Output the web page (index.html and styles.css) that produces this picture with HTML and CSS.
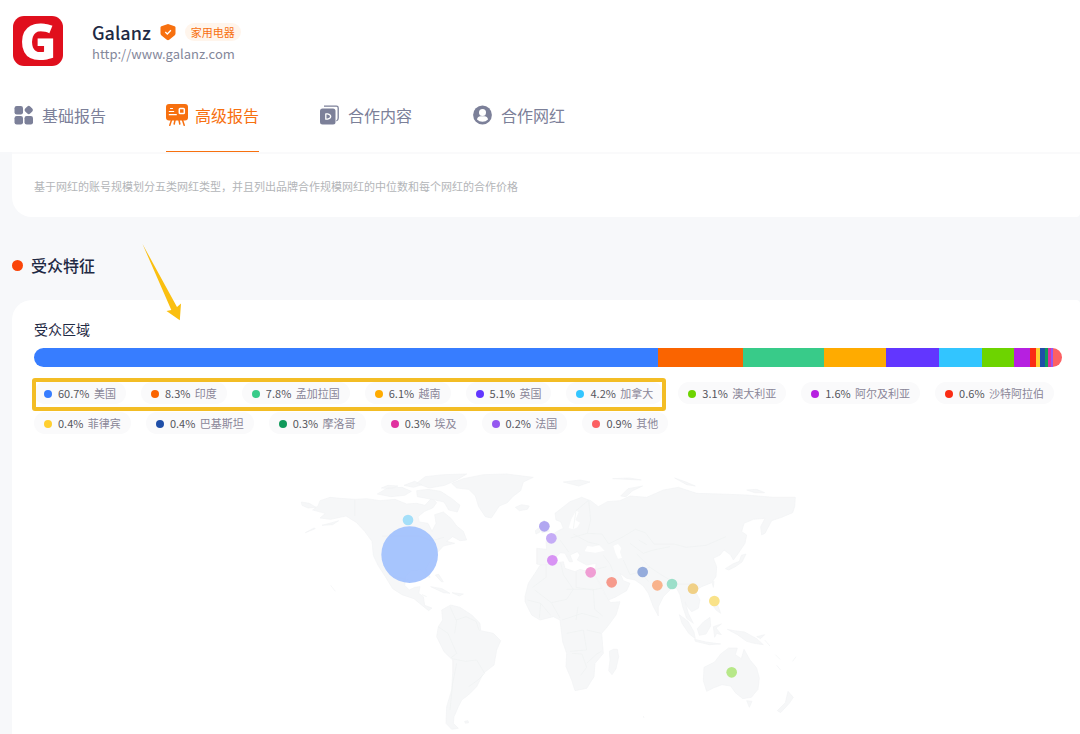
FILE: index.html
```html
<!DOCTYPE html>
<html lang="zh-CN">
<head>
<meta charset="utf-8">
<meta name="viewport" content="width=device-width, initial-scale=1">
<title>Galanz 高级报告</title>
<link rel="stylesheet" href="styles.css">
</head>
<body>
<header class="header">
  <div class="brand">
    <div class="logo">G</div>
    <div class="brand-info">
      <div class="brand-line">
        <h1 class="brand-name">Galanz</h1>
        <svg class="shield" viewBox="0 0 16 18" aria-hidden="true"><path d="M8 1l6.600 2.300q.9.300.9 1.300v6q0 1.200-1 2L9.200 16.800q-1.200.800-2.400 0L1.500 12.600q-1-.8-1-2v-6q0-1 .9-1.300z" fill="#f7700f"/><path d="M5.300 9l2 2 3.600-3.800" fill="none" stroke="#fff" stroke-width="1.300"/></svg>
        <span class="tag">家用电器</span>
      </div>
      <a class="brand-url" href="http://www.galanz.com">http://www.galanz.com</a>
    </div>
  </div>
  <nav class="tabs">
    <a class="tab" href="#basic">
      <svg class="tab-icon" viewBox="0 0 22 22" aria-hidden="true" fill="currentColor"><rect x="1.500" y="2" width="8.500" height="8.500" rx="2.200"/><rect x="1.500" y="12" width="8.500" height="8.500" rx="2.200"/><rect x="11.500" y="12" width="8.500" height="8.500" rx="2.200"/><rect x="12.250" y="2.500" width="7" height="7" rx="2" transform="rotate(45 15.750 6)"/></svg>
      <span>基础报告</span>
    </a>
    <a class="tab tab-active" href="#advanced" aria-current="page">
      <svg class="tab-icon" viewBox="0 0 22 22" aria-hidden="true"><rect x="0" y="0" width="22" height="16.500" rx="3" fill="#f7700f"/><path d="M5.500 16l-1.700 5.300M9 16l-.8 4M13 16l.8 4M16.500 16l1.700 5.300" stroke="#f7700f" stroke-width="1.500" stroke-linecap="round"/><path d="M4.500 4.500h2M3.300 7.500h4.400M3.300 10.700h7" stroke="#fff" stroke-width="1.200" stroke-linecap="round"/><rect x="13.300" y="4.500" width="5" height="5" rx=".8" fill="none" stroke="#fff" stroke-width="1.500"/></svg>
      <span>高级报告</span>
    </a>
    <a class="tab" href="#content">
      <svg class="tab-icon" viewBox="0 0 22 22" aria-hidden="true"><path d="M5 2.200h12.500q1.700 0 1.700 1.700V14q0 2.500-1.800 2.900" fill="none" stroke="currentColor" stroke-width="1.300"/><rect x="1" y="4.500" width="15.500" height="16" rx="2.500" fill="currentColor"/><path d="M6.800 9.800v5.400h1.700q3.200-.8 3.200-2.700T8.500 9.800z" fill="none" stroke="#fff" stroke-width="1.300" stroke-linejoin="round"/></svg>
      <span>合作内容</span>
    </a>
    <a class="tab" href="#creators">
      <svg class="tab-icon" viewBox="0 0 22 22" aria-hidden="true"><circle cx="10.500" cy="11" r="9.400" fill="currentColor"/><circle cx="10.500" cy="8.500" r="3.500" fill="#fff"/><path d="M5 15.500q.2-2.800 3.600-3.200h3.800q3.400.4 3.600 3.200-2.200 2.200-5.500 2.200T5 15.500z" fill="#fff"/></svg>
      <span>合作网红</span>
    </a>
  </nav>
</header>

<main class="main">
  <section class="card note-card">
    <p class="note">基于网红的账号规模划分五类网红类型，并且列出品牌合作规模网红的中位数和每个网红的合作价格</p>
  </section>

  <h2 class="section-title">受众特征</h2>

  <section class="card region-card">
    <h3 class="card-title">受众区域</h3>
    <div class="bar">
      <span class="c-us" style="flex-grow:60.7"></span>
      <span class="c-in" style="flex-grow:8.3"></span>
      <span class="c-bd" style="flex-grow:7.8"></span>
      <span class="c-vn" style="flex-grow:6.1"></span>
      <span class="c-gb" style="flex-grow:5.1"></span>
      <span class="c-ca" style="flex-grow:4.2"></span>
      <span class="c-au" style="flex-grow:3.1"></span>
      <span class="c-dz" style="flex-grow:1.6"></span>
      <span class="c-sa" style="flex-grow:.6"></span>
      <span class="c-ph" style="flex-grow:.4"></span>
      <span class="c-pk" style="flex-grow:.4"></span>
      <span class="c-ma" style="flex-grow:.3"></span>
      <span class="c-eg" style="flex-grow:.3"></span>
      <span class="c-fr" style="flex-grow:.2"></span>
      <span class="c-ot" style="flex-grow:.9"></span>
    </div>
    <ul class="legend">
      <li class="pill"><i class="dot c-us"></i><b>60.7%</b> 美国</li>
      <li class="pill"><i class="dot c-in"></i><b>8.3%</b> 印度</li>
      <li class="pill"><i class="dot c-bd"></i><b>7.8%</b> 孟加拉国</li>
      <li class="pill"><i class="dot c-vn"></i><b>6.1%</b> 越南</li>
      <li class="pill"><i class="dot c-gb"></i><b>5.1%</b> 英国</li>
      <li class="pill"><i class="dot c-ca"></i><b>4.2%</b> 加拿大</li>
      <li class="pill"><i class="dot c-au"></i><b>3.1%</b> 澳大利亚</li>
      <li class="pill"><i class="dot c-dz"></i><b>1.6%</b> 阿尔及利亚</li>
      <li class="pill"><i class="dot c-sa"></i><b>0.6%</b> 沙特阿拉伯</li>
      <li class="pill"><i class="dot c-ph"></i><b>0.4%</b> 菲律宾</li>
      <li class="pill"><i class="dot c-pk"></i><b>0.4%</b> 巴基斯坦</li>
      <li class="pill"><i class="dot c-ma"></i><b>0.3%</b> 摩洛哥</li>
      <li class="pill"><i class="dot c-eg"></i><b>0.3%</b> 埃及</li>
      <li class="pill"><i class="dot c-fr"></i><b>0.2%</b> 法国</li>
      <li class="pill"><i class="dot c-ot"></i><b>0.9%</b> 其他</li>
    </ul>
    <div class="highlight" aria-hidden="true"></div>
    <svg class="arrow" viewBox="142 244 40 77" aria-hidden="true"><path d="M142.500 244L177 307l4-3.500-1.200 16.800L166.500 311l4.800-1z" fill="#fabf10"/></svg>

    <svg class="map" viewBox="0 0 1548 822" role="img" aria-label="受众区域分布地图">
      <g class="land">
        <!-- North and Central America -->
        <path d="M90 122l30-10 30 3 45 3 35-2 40 6 45-4 35 14 30-2 25 6 20-22 15 14-12 16-24 10-20 16 4 16 26 4 12 24 12-24-4-26 26-8 24 20 16 22 20 16 10 26-20 2-22-12-18 14 24 6-34 8-20 22-18 24-14 22 12 26-10-2-18-20-30 4-14 14-4 28 14 14 16-8 16-2-4 20 14 10 4 26 22 8-10 8-20-16-24-20-36-12-28-18-22-36-22-34-14-30-4-42-22-30-24-26-32-20-46 10-32-4 16-14-38-10 16-12z"/>
        <path d="M34 126l24 4 20 12-24 2-18-8zM46 218l26-14 4 2zM96 196l30-8 20-6-18 12z"/>
        <!-- Arctic islands and Greenland -->
        <path d="M262 102l30-18 44-2 28 12-20 12-42 4zM274 84l20-8 30 2-20 8zM342 76l32-12 22 10-26 8zM380 92l34-4 38 6 34 22 24 20-8 20-26-6-14-24-36-8-44-8zM380 70l26-20 54-6 70-2-30 18-36 16-46 8z"/>
        <path d="M485 70L520 56 580 44 650 42 730 52 700 66 692 92 668 110 652 128 628 138 604 174 586 170 566 140 556 108 536 88 500 84z"/>
        <path d="M676 142l18-8 24 4-6 10-24 4zM436 345l18 20 6 0-14-22zM422 380l34 6 24 14-20-2zM486 398l34 4-12 6zM122 376l14 18"/>
        <!-- South America -->
        <path d="M455 450L482 435 510 442 545 465 570 490 572 512 610 520 632 542 620 570 612 615 580 640 560 680 535 705 515 720 505 740 492 770 490 790 505 805 485 808 468 790 470 740 485 690 488 640 488 600 462 575 440 530 445 500 458 480z"/>
        <path d="M524 784l10-2 2 6-10 2z"/>
        <g transform="translate(690 0)">
          <!-- Europe and Asia -->
          <path d="M105 160L150 125 185 112 212 122 235 140 262 125 300 122 330 108 380 112 430 90 475 82 530 100 600 102 680 105 760 112 826 112 824 140 818 158 785 172 755 182 735 220 725 225 722 200 735 175 700 178 672 190 665 215 680 225 675 250 655 280 640 300 632 285 612 270 600 285 580 295 590 320 588 350 575 368 545 380 525 392 540 420 535 445 515 455 502 440 495 425 505 460 520 490 500 475 488 440 480 405 470 385 455 385 430 410 415 440 415 468 400 440 385 400 370 378 345 360 320 355 300 340 310 362 330 370 320 392 285 412 265 420 245 380 225 345 228 310 200 315 172 300 180 285 172 275 150 285 158 305 148 305 135 280 122 278 110 290 95 295 82 318 50 312 50 265 80 268 78 245 95 225 115 212 130 205 122 185 108 180z"/>
          <path d="M62 212L72 180 84 196 88 214 66 218zM46 212l10-8 4 12-12 6zM130 66l50-6 30 6-34 12zM278 56l50-2 36 6zM302 108l22-22 44-8-30 14-20 18zM464 54l34 12 28 12-26-4zM680 90l30-2 24 10-30 0zM616 326l22-14 20-8 6-18 14-4-12 24-20 14-20 10z"/>
          <!-- Africa and Madagascar -->
          <path d="M60 316L95 312 130 305 135 325 165 335 180 328 222 340 240 375 258 410 272 428 300 425 288 465 262 500 245 520 250 580 225 610 222 650 200 685 165 692 155 660 138 620 140 580 128 545 120 480 100 470 60 480 35 465 15 425 15 410 25 370 45 340z"/>
          <path d="M268 574l12-6 12 0 4 22-8 36-12 18-10-12 4-32z"/>
        </g>
        <!-- South-east Asia and Oceania -->
        <path d="M1168 464l26 20 18 32 4 20-20-16-20-30zM1214 538l34 8 44 6-34 2-42-10zM1222 506l18-20 20-14 2 26-14 24-20 4zM1270 500l24-8-16 12 16 20-14-4-6 12zM1270 438l12-6 10 28-14-10zM1312 508l20 4 32 4 36 20 20 18-28-4-22-6-28-20zM1400 530l24-6-12 12zM1424 540l16 18M1266 368l6-4-2 18z"/>
        <path d="M1242 622l32-16 18-24 24-18 26 0-6 20 18 12 8-28 18 32 20 24 8 30-4 34-20 24-26 4-22-18-14-20-26-4-26 10-20 10-10-32z"/>
        <path d="M1370 722l16 2-8 18zM1494 694l16 18-12 18-26 28-10-6 24-24zM1456 584l14 14M1460 616l12 14M1508 604l10-14M1060 768l2 6"/>
      </g>
      <!-- Black Sea, Caspian Sea, Baltic Sea -->
      <path class="sea" d="M884 274l8-16 16 2 20-4 16 16-28 6zM970 258l14-6 10 12-4 12 6 18-12 2-8-18zM836 204l8-26 14-26 8 4-10 24 14 8-8 14-12 6z"/>
      <g class="borders">
        <path d="M194 120v48M276 228h110l40 14 36-10M310 350l60 12M396 404l14 6M480 440l18 40 30-10 30 14 10 28M444 500l30 20 26 60-18 14M486 596l40 8 34-4 24 40-20 20-28 20M500 610l-12 60-8 80M500 480l-6 40"/>
        <path d="M850 206l8-54 36-30M896 120l6 60-10 40-50 14M810 240l26 36M850 222l44 24 34 8M892 220l44 2 20 30 40-20 40-24 30 10 26 34 60 0 36 10 60-6 60-26M1020 250l40 30 30-10 50-10M1040 282l40 40 30 20 50 30 44 0M1000 300l20 44 30-8 30-16M940 286l20 26 10 24M910 330l40-10M1050 340l26 24M1070 254l-24-14"/>
        <path d="M768 314l0 38-40 30M812 308l8 36 30 44-20 30-46 10-50-38M858 336l0 46 50 8 28-6M830 388l80 0 4 60 24 20M712 420l40 10 30 36M784 428l26 46M816 480l60-20 50 14M830 520l50-10 10 60-50 4M890 510l44 10M846 580l30 2 14 40-18 24M890 610l30-28 14-8M864 440l-6 40M752 430l-4 44"/>
      </g>
      <g class="bubbles">
        <circle class="b-ca" cx="354" cy="180" r="16"/>
        <circle class="b-us" cx="359" cy="284" r="85"/>
        <circle class="b-gb" cx="763" cy="199" r="16"/>
        <circle class="b-fr" cx="784" cy="235" r="16"/>
        <circle class="b-dz" cx="787" cy="301" r="16"/>
        <circle class="b-eg" cx="902" cy="337" r="16"/>
        <circle class="b-sa" cx="965" cy="367" r="16"/>
        <circle class="b-pk" cx="1058" cy="336" r="16"/>
        <circle class="b-in" cx="1102" cy="376" r="16"/>
        <circle class="b-bd" cx="1146" cy="372" r="16"/>
        <circle class="b-vn" cx="1209" cy="386" r="16"/>
        <circle class="b-ph" cx="1273" cy="423" r="16"/>
        <circle class="b-au" cx="1325" cy="637" r="16"/>
      </g>
    </svg>
  </section>
</main>
</body>
</html>
```
FILE: styles.css
```css
* { box-sizing: border-box; }

body {
  margin: 0;
  min-height: 100vh;
  background: #f7f8fa;
  color: #1f2a44;
  font-family: "Noto Sans CJK SC", "Noto Sans", sans-serif;
}

h1, h2, h3, p, ul { margin: 0; padding: 0; }
a { color: inherit; text-decoration: none; }

/* Header */
.header {
  padding: 16px 13px 0;
  background: #fff;
}
.brand { display: flex; gap: 29px; }
.logo {
  width: 50px;
  height: 50px;
  border-radius: 11px;
  background: #e00f1d;
  color: #fff;
  font: 800 50px/50px "Open Sans", sans-serif;
  text-align: center;
}
.brand-info { padding-top: 5px; }
.brand-line { display: flex; align-items: center; height: 22px; }
.brand-name { font-size: 18px; font-weight: 500; line-height: 22px; }
.shield { width: 16px; height: 18px; margin: 0 9px; }
.tag {
  padding: 0 6px;
  border-radius: 9px;
  background: #fff5ec;
  color: #f7700f;
  font-size: 11px;
  line-height: 18px;
}
.brand-url {
  display: block;
  color: #84879a;
  font-size: 13px;
  line-height: 22px;
}

.tabs { display: flex; gap: 60px; margin-top: 14px; }
.tab {
  display: flex;
  align-items: center;
  gap: 7px;
  height: 72px;
  padding-bottom: 2px;
  border-bottom: 1px solid transparent;
  color: #7c8099;
  font-size: 16px;
}
.tab-active { border-bottom-color: #f7700f; color: #f7700f; }
.tab-icon { width: 22px; height: 22px; }

/* Cards */
.main { padding-left: 12px; }
.card {
  position: relative;
  padding: 0 18px 0 22px;
  border-radius: 20px 4px 4px 20px;
  background: #fff;
}
.note-card {
  padding-top: 21px;
  padding-bottom: 20px;
  border-top: 2px solid #fafafb;
  border-radius: 0 0 4px 20px;
}
.note { color: #b3b5b8; font-size: 11px; line-height: 22px; }

.section-title {
  display: flex;
  align-items: center;
  gap: 8px;
  margin: 36px 0 23px;
  font-size: 16px;
  font-weight: 500;
  line-height: 24px;
}
.section-title::before {
  content: "";
  width: 11px;
  height: 11px;
  border-radius: 50%;
  background: #fa4408;
}

.region-card { padding-top: 19px; border-radius: 20px 4px 0 0; }
.card-title { font-size: 14px; font-weight: 400; line-height: 20px; }

.bar {
  display: flex;
  height: 19px;
  margin-top: 9px;
  border-radius: 10px;
  overflow: hidden;
}
.bar span { flex-basis: 0; }

/* Legend */
.legend {
  display: flex;
  flex-wrap: wrap;
  gap: 8px 15px;
  margin-top: 15px;
  list-style: none;
}
.pill {
  padding: 0 10px;
  border-radius: 11px;
  background: #fafafb;
  color: #8a8698;
  font-size: 11px;
  line-height: 22px;
  white-space: nowrap;
}
.pill b { margin-right: 2px; color: #55555c; font-weight: 400; }
.dot {
  display: inline-block;
  width: 8px;
  height: 8px;
  margin-right: 6px;
  border-radius: 50%;
}

.c-us { background: #377dff; }
.c-in { background: #fa6400; }
.c-bd { background: #38cb89; }
.c-vn { background: #ffab00; }
.c-gb { background: #6236ff; }
.c-ca { background: #32c5ff; }
.c-au { background: #6dd400; }
.c-dz { background: #b620e0; }
.c-sa { background: #fa2c14; }
.c-ph { background: #ffcf30; }
.c-pk { background: #1f4fa8; }
.c-ma { background: #109a5b; }
.c-eg { background: #e0309f; }
.c-fr { background: #9558f0; }
.c-ot { background: #fc6063; }

/* Annotations */
.highlight {
  position: absolute;
  top: 78px;
  left: 20px;
  width: 634px;
  height: 33px;
  border: 4px solid #f3bd25;
  border-radius: 3px;
}
.arrow {
  position: absolute;
  top: -56px;
  left: 130px;
  width: 40px;
  height: 77px;
}

/* Map */
.map {
  display: block;
  width: 516px;
  max-width: 100%;
  margin: 26px auto 0;
}
.land { fill: #f6f7f8; stroke: #f1f3f4; stroke-width: 2; stroke-linejoin: round; }
.sea { fill: #fff; }
.borders { fill: none; stroke: #eff1f2; stroke-width: 2; }
.bubbles { fill-opacity: .9; }
.b-us { fill: #9fbffd; }
.b-ca { fill: #9bdcf8; }
.b-gb { fill: #aa9df0; }
.b-fr { fill: #c0a3f5; }
.b-dz { fill: #d487f3; }
.b-eg { fill: #ee93cf; }
.b-sa { fill: #f68f80; }
.b-pk { fill: #8ba3d8; }
.b-in { fill: #faab80; }
.b-bd { fill: #92dcc4; }
.b-vn { fill: #f0cb79; }
.b-ph { fill: #f8df7c; }
.b-au { fill: #b0e57c; }
```
